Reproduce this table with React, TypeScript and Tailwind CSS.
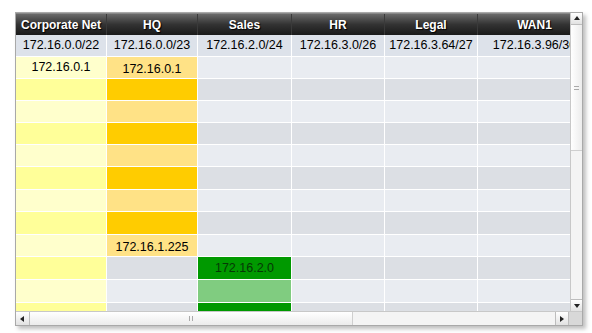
import React from "react";

const columns = [
  { name: "Corporate Net", subnet: "172.16.0.0/22", w: "w-[91px]" },
  { name: "HQ", subnet: "172.16.0.0/23", w: "w-[91px]" },
  { name: "Sales", subnet: "172.16.2.0/24", w: "w-[94px]" },
  { name: "HR", subnet: "172.16.3.0/26", w: "w-[93px]" },
  { name: "Legal", subnet: "172.16.3.64/27", w: "w-[93px]" },
  { name: "WAN1", subnet: "172.16.3.96/30", w: "w-[114px]" },
];

const rowHeights = ["h-[22px]", "h-[22px]", "h-[22px]", "h-[22px]", "h-[22px]", "h-[23px]", "h-[22px]", "h-[23px]", "h-[22px]", "h-[23px]", "h-[23px]", "h-[23px]"];

// colour for a cell, by row index (0 based) and column
function cellColor(row: number, col: number) {
  const strong = row % 2 === 1;
  if (col === 0) return strong ? "bg-[#ffff99]" : "bg-[#ffffcc]";
  if (col === 1 && row < 9) return strong ? "bg-[#ffcc00]" : "bg-[#ffe286]";
  if (col === 2 && row >= 9) return row === 10 ? "bg-[#80cc80]" : "bg-[#009900]";
  return strong ? "bg-[#dcdfe4]" : "bg-[#e9ecf1]";
}

const labels: Record<string, string> = {
  "0-0": "172.16.0.1",
  "0-1": "172.16.0.1",
  "8-1": "172.16.1.225",
  "9-2": "172.16.2.0",
};

function Arrow({ dir }: { dir: "up" | "down" | "left" | "right" }) {
  const pts = {
    up: "1,5 4,1 7,5",
    down: "1,2 4,6 7,2",
    left: "5,1 1,4 5,7",
    right: "2,1 6,4 2,7",
  }[dir];
  return (
    <svg width="8" height="8" viewBox="0 0 8 8">
      <polygon points={pts} fill="#222" />
    </svg>
  );
}

export default function App() {
  return (
    <div className="w-[592px] h-[333px] bg-white pt-[12px] pl-[15px]" style={{ fontFamily: '"Liberation Sans", Arial, sans-serif' }}>
      <div className="w-[568px] h-[314px] border border-[#a9a9a9] bg-white flex flex-col shadow-[3px_3px_4px_rgba(0,0,0,0.25)]">
        <div className="flex h-[298px]">
          <div className="w-[554px] overflow-hidden">
            <div className="flex h-[22px] bg-gradient-to-b from-[#6a6a6a] via-[#333] to-[#1a1a1a] border-t border-[#888]">
              {columns.map((c) => (
                <div key={c.name} className={`${c.w} shrink-0 flex items-center justify-center text-[12px] font-bold text-white border-r border-[#3a3a3a] [text-shadow:1px_1px_1px_#000]`}>
                  {c.name}
                </div>
              ))}
            </div>
            <div className="flex h-[22px] bg-[#dde2ea] border-b border-white">
              {columns.map((c) => (
                <div key={c.subnet} className={`${c.w} shrink-0 flex items-center justify-center text-[12.5px] text-black border-r border-white whitespace-nowrap overflow-hidden`}>
                  {c.subnet}
                </div>
              ))}
            </div>
            {rowHeights.map((h, r) => (
              <div key={r} className={`flex ${h}`}>
                {columns.map((c, ci) => (
                  <div
                    key={c.name}
                    className={`${c.w} shrink-0 flex items-center justify-center text-[12.5px] border-r border-b border-white ${cellColor(r, ci)} ${ci === 1 ? "pt-[3px]" : ""} ${r === 9 && ci === 2 ? "text-[#063806]" : "text-black"}`}
                  >
                    {labels[`${r}-${ci}`] ?? ""}
                  </div>
                ))}
              </div>
            ))}
          </div>
          <div className="w-[12px] flex flex-col bg-[#f4f4f4] border-l border-[#c8c8c8]">
            <div className="h-[12px] flex items-center justify-center bg-gradient-to-b from-white to-[#e2e2e2] border-b border-[#bdbdbd]">
              <Arrow dir="up" />
            </div>
            <div className="h-[126px] bg-gradient-to-r from-white to-[#ececec] border-b border-[#cfcfcf] flex items-center justify-center">
              <div className="w-[5px] h-[4px] border-y border-[#aaa]" />
            </div>
            <div className="flex-1" />
            <div className="h-[12px] flex items-center justify-center bg-gradient-to-b from-white to-[#e2e2e2] border-t border-[#bdbdbd]">
              <Arrow dir="down" />
            </div>
          </div>
        </div>
        <div className="flex flex-1 border-t border-[#c8c8c8] bg-[#f4f4f4]">
          <div className="w-[14px] flex items-center justify-center bg-gradient-to-b from-white to-[#e2e2e2] border-r border-[#bdbdbd]">
            <Arrow dir="left" />
          </div>
          <div className="w-[323px] bg-gradient-to-b from-white to-[#ececec] border-r border-[#cfcfcf] flex items-center justify-center">
            <div className="w-[4px] h-[5px] border-x border-[#aaa]" />
          </div>
          <div className="flex-1" />
          <div className="w-[13px] flex items-center justify-center bg-gradient-to-b from-white to-[#e2e2e2] border-l border-[#bdbdbd]">
            <Arrow dir="right" />
          </div>
          <div className="w-[14px] bg-[#d8d8d8] border-l border-[#bdbdbd]" />
        </div>
      </div>
    </div>
  );
}
